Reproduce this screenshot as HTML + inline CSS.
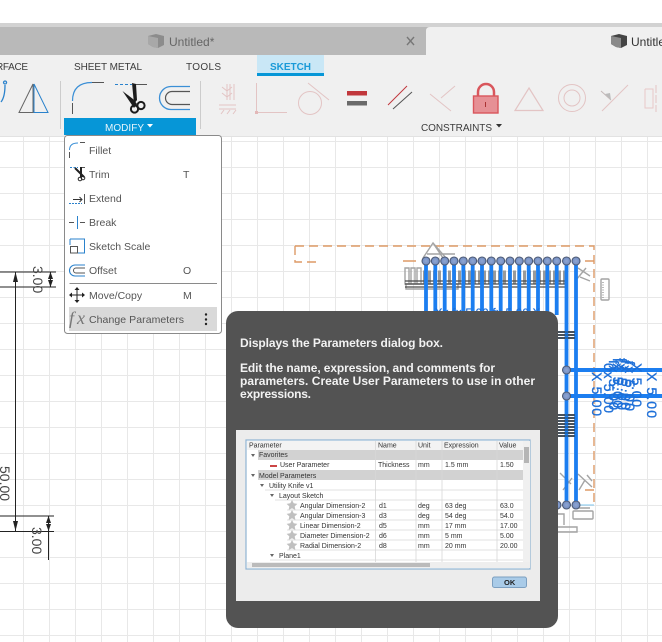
<!DOCTYPE html>
<html><head><meta charset="utf-8"><style>
html,body{margin:0;padding:0;background:#fff}
svg{display:block}
text{font-family:"Liberation Sans",sans-serif}
.m{font-size:10.5px;fill:#555}
.tb{font-size:10px;fill:#3c3c3c}
.tip{font-size:12px;font-weight:bold;fill:#f2f2f2}
.t{font-size:7px;fill:#333}
</style></head><body>
<svg width="662" height="642" viewBox="0 0 662 642" xmlns="http://www.w3.org/2000/svg">
<defs>
<pattern id="g" x="23" y="141" width="26" height="26" patternUnits="userSpaceOnUse">
<path d="M0.5 0V26M0 0.5H26" stroke="#e8e8e8" stroke-width="1" fill="none"/>
</pattern>
<filter id="b"><feGaussianBlur stdDeviation="0.35"/></filter>
<radialGradient id="c"><stop offset="0" stop-color="#8fa6d3"/><stop offset="1" stop-color="#728cc0"/></radialGradient>
</defs>
<rect width="662" height="642" fill="#fff"/>
<rect y="137" width="662" height="505" fill="url(#g)"/>

<!-- tab bar -->
<rect y="23" width="662" height="4" fill="#d2d2d2"/>
<rect y="27" width="662" height="28" fill="#b9b9b9"/>
<path d="M426 55V31q0-4 4-4H662V55Z" fill="#f0f0f0"/>
<rect y="55" width="662" height="81" fill="#f0f0f0"/>
<rect y="136" width="662" height="1" fill="#e2e2e2"/>
<path d="M148 36l8-2 8 2v9l-6 3-5-1-5-3Z" fill="#8c8c8c"/><path d="M148 36l10 2v10l-5-1-5-3Z" fill="#a8a8a8"/>
<text x="169" y="46" font-size="12" fill="#666">Untitled*</text>
<path d="M407 37l7 8M414 37l-7 8" stroke="#777" stroke-width="1.4"/>
<path d="M611 36l8-2 8 2v9l-6 3-5-1-5-3Z" fill="#444"/><path d="M611 36l10 2v10l-5-1-5-3Z" fill="#8a8a8a"/>
<text x="631" y="46" font-size="12" fill="#333">Untitled</text>

<!-- ribbon tabs -->
<text x="-4" y="70" class="tb" textLength="32">RFACE</text>
<text x="74" y="70" class="tb" textLength="68">SHEET METAL</text>
<text x="186" y="70" class="tb" textLength="35">TOOLS</text>
<rect x="257" y="55" width="67" height="18" fill="#c9e7f6"/>
<rect x="257" y="73" width="67" height="3" fill="#0696d7"/>
<text x="270" y="70" font-size="10" font-weight="bold" fill="#1a9ad8" textLength="41">SKETCH</text>

<!-- toolbar icons -->
<path d="M5 84a1.500 1.500 0 1 1 .1 0M5 85q0 12-4 17" stroke="#2a82cc" stroke-width="1.300" fill="none"/>
<path d="M33 84L19 112.500H33Z" fill="none" stroke="#666" stroke-width="1"/>
<path d="M34 84L48 112.500H34Z" fill="none" stroke="#2a82cc" stroke-width="1"/>
<rect x="60" y="81" width="1" height="48" fill="#ccc"/>
<path d="M72.500 101Q72.500 82.500 92 82.500" fill="none" stroke="#3a8fd6" stroke-width="1.200"/>
<path d="M92 82.500H104M72.500 103V114" stroke="#555" stroke-width="1"/>
<path d="M115 84.500H132" stroke="#2a82cc" stroke-dasharray="3 2"/><path d="M135 84.500H147" stroke="#555"/>
<path d="M132 83L136 84L137 100L134 104Z" fill="#1c1c1c"/>
<path d="M122.500 91L133 99L137 104L134 108Z" fill="#1c1c1c"/>
<circle cx="134.500" cy="109" r="3.600" fill="none" stroke="#1c1c1c" stroke-width="2"/>
<circle cx="141" cy="105.500" r="3.600" fill="none" stroke="#1c1c1c" stroke-width="2"/>
<path d="M190 86.500H171A11.500 11.500 0 0 0 171 109.500H190" fill="none" stroke="#3a8fd6" stroke-width="1.300"/>
<path d="M190 91.500H172A6.500 6.500 0 0 0 172 104.500H190" fill="none" stroke="#555" stroke-width="1.200"/>
<rect x="200" y="81" width="1" height="48" fill="#ccc"/>
<g fill="none" stroke="#e3c4c4" stroke-width="1">
<path d="M227 84V100M230 84V100M234 84V100M222 87l5 4 5-4M222 93l5 4 5-4M219 105H236M219 109H236M221 114l3-4M227 114l3-4M233 114l3-4"/>
<path d="M256.500 83V112.500H287"/>
<circle cx="310" cy="103" r="11.500"/><path d="M308 83L329 100"/>
<path d="M430 94L451 111M455 86L441 98"/>
<path d="M529 88L543 110.500H515Z" stroke-width="1.200"/>
<circle cx="572" cy="98" r="13.500"/><circle cx="572" cy="98" r="8"/>
<path d="M602 111L628 85"/><path d="M645 89H653V108H645V89" stroke="#e8c8c8"/><path d="M656 85V112" stroke-dasharray="8 2"/>
</g>
<path d="M601 91L611 100" stroke="#c4b8b8" fill="none"/>
<rect x="255" y="111" width="3" height="3" fill="#e3b8b8"/>
<path d="M605 94l6 6-1-7Z" fill="#bbb"/>
<rect x="347" y="91" width="20" height="4.500" fill="#c1373c"/>
<rect x="347" y="101" width="20" height="4.500" fill="#6a6a6a"/>
<path d="M388 105L407 86" stroke="#c1373c" stroke-width="1"/><path d="M393 109L412 92" stroke="#555" stroke-width="1"/>
<path d="M478 96V92a8 8 0 0 1 16 0V96" fill="none" stroke="#d9565c" stroke-width="2.500"/>
<rect x="473.500" y="96" width="24.500" height="17" fill="#e69095" stroke="#d9565c" stroke-width="1.400"/>
<path d="M485.500 102V107" stroke="#a33" stroke-width="1"/>

<!-- panel footers -->
<rect x="64" y="118" width="132" height="17" fill="#0696d7"/>
<text x="105" y="131" font-size="10" fill="#e8f5fc" textLength="39">MODIFY</text>
<path d="M147 124h6l-3 3.500Z" fill="#fff"/>
<text x="421" y="131" font-size="10" fill="#3c3c3c" textLength="71">CONSTRAINTS</text>
<path d="M496 124h6l-3 3.500Z" fill="#333"/>

<!-- left dimensions -->
<g stroke="#222" stroke-width="1" fill="none">
<path d="M0 272H56M0 287H56M0 516H54M0 531.500H54M15.500 272V531M50.500 272V287M48.500 516V560"/>
</g>
<path d="M15.500 272l-2.500 10h5ZM15.500 531l-2.500-10h5ZM50.500 272l-2.500 7h5ZM50.500 287l-2.500-7h5ZM48.500 516l-2.500 7h5ZM48.500 531l-2.500-7h5Z" fill="#222"/>
<g font-size="14" fill="#444">
<text transform="translate(33,266) rotate(90)">3.00</text>
<text transform="translate(0,466) rotate(90)">50.00</text>
<text transform="translate(32,527) rotate(90)">3.00</text>
</g>

<!-- sketch -->
<g filter="url(#b)">
<g fill="none" stroke="#dd9a66" stroke-width="1.400" stroke-dasharray="9 5">
<path d="M295 246H594V505M295 246V262H316"/>
</g>
<path d="M403 261H416M585 261H594M585 490H594" stroke="#dd9a66" stroke-width="1.400"/>
<g fill="none" stroke="#a4a4a4" stroke-width="1.400">
<path d="M423 258L433 243L443 258M427 254H455M433 243L446 258"/>
<path d="M405 268h4v16h-4zM411 268h4v16h-4zM417 268h4v16h-4zM406 284h52v5h-52z"/>
<path d="M590 281L580 277M586 268L576 280M578 268L590 276"/>
<rect x="601" y="279" width="8" height="21" rx="1"/>
<path d="M603 282V298" stroke-dasharray="1 1.500" stroke-width="1.500"/>
<path d="M578 474L592 487M585 480L579 490M587 475L592 481"/>
<rect x="573" y="511" width="20" height="8" rx="1"/>
<path d="M575 508H590M560 473L571 484M563 490L572 478" />
<path d="M558 514H564V525M558 527H577V532H558"/>
</g>
<path d="M423 277H565" stroke="#9a9a9a" stroke-width="13" stroke-dasharray="3 2"/>
<path d="M405 281H565M405 284H565M405 287H565" stroke="#4a4a4a" stroke-width="1.300"/>
<g stroke="#1a7ef0" stroke-width="3.800" fill="none">
<path d="M426 261V315M435.300 261V315M444.700 261V315M454 261V315M463.300 261V315M472.700 261V315M482 261V315M491.300 261V315M500.700 261V315M510 261V315M519.300 261V315M528.700 261V315M538 261V315M547.300 261V315M556.700 261V315M566.500 261V505M576 261V505"/>
<path d="M566 370H662M566 396H662" stroke-width="4"/>
</g>
<path d="M558 332H575M558 335H575M558 338H575M558 415H575M558 418H575M558 421H575M558 424H575M558 427H575M558 430H575M558 433H575M558 436H575" stroke="#2f3b46" stroke-width="1.800"/>
<path d="M566.500 330V440M576 330V440" stroke="#1a7ef0" stroke-width="3" opacity=".55"/>
<path d="M576 505H594" stroke="#7cc4ec"/>
<g fill="url(#c)" stroke="#4d5a74" stroke-width="1.100">
<circle cx="426" cy="261" r="4"/><circle cx="435.300" cy="261" r="4"/><circle cx="444.700" cy="261" r="4"/><circle cx="454" cy="261" r="4"/><circle cx="463.300" cy="261" r="4"/><circle cx="472.700" cy="261" r="4"/><circle cx="482" cy="261" r="4"/><circle cx="491.300" cy="261" r="4"/><circle cx="500.700" cy="261" r="4"/><circle cx="510" cy="261" r="4"/><circle cx="519.300" cy="261" r="4"/><circle cx="528.700" cy="261" r="4"/><circle cx="538" cy="261" r="4"/><circle cx="547.300" cy="261" r="4"/><circle cx="556.700" cy="261" r="4"/><circle cx="566.500" cy="261" r="4"/><circle cx="576" cy="261" r="4"/>
<circle cx="566.500" cy="370" r="4"/><circle cx="566.500" cy="396" r="4"/>
<circle cx="557" cy="505" r="4"/><circle cx="566.500" cy="505" r="4"/><circle cx="576" cy="505" r="4"/>
</g>
<g fill="#1f6fd8" stroke="#1f6fd8" stroke-width=".35" font-size="14">
<text transform="translate(592,372) rotate(90)" textLength="44">X 5.00</text>
<text transform="translate(604,363) rotate(90)" textLength="50">0x 5.00</text>
<text transform="translate(609,360) rotate(90)" textLength="50">fx 5.00</text>
<text transform="translate(613,358) rotate(90)" textLength="50">fx 5.00</text>
<text transform="translate(617,358) rotate(90)" textLength="52">fx 5.00</text>
<text transform="translate(621,360) rotate(90)" textLength="50">fx 5.00</text>
<text transform="translate(625,361) rotate(90)" textLength="50">fx 5.00</text>
<text transform="translate(632,363) rotate(90)" textLength="44">X 5.00</text>
<text transform="translate(647,372) rotate(90)" textLength="46">X 5.00</text>
</g>
<text transform="translate(435,316)" font-size="11" fill="#1f6fd8" stroke="#1f6fd8" stroke-width=".3" textLength="105">Xx fx 5.00 fx 5.00 X</text>
</g>

<!-- menu -->
<rect x="64.500" y="135.500" width="157" height="198" rx="3" fill="#fff" stroke="#8a8a8a"/>
<rect x="69" y="307" width="148" height="24" fill="#d9d9d9"/>
<path d="M69.500 283.500H217" stroke="#8a8a8a" fill="none"/>
<text x="89" y="154" class="m">Fillet</text>
<text x="89" y="178" class="m">Trim</text><text x="183" y="178" class="m">T</text>
<text x="89" y="202" class="m">Extend</text>
<text x="89" y="226" class="m">Break</text>
<text x="89" y="250" class="m">Sketch Scale</text>
<text x="89" y="274" class="m">Offset</text><text x="183" y="274" class="m">O</text>
<text x="89" y="299" class="m">Move/Copy</text><text x="183" y="299" class="m">M</text>
<text x="89" y="323" class="m" textLength="95">Change Parameters</text>
<!-- menu icons -->
<path d="M69.500 150Q69.500 143 78 143" fill="none" stroke="#3a8fd6"/><path d="M80 142.500H85M69.500 152V158" stroke="#555"/>
<path d="M70 167.500H78" stroke="#2a82cc" stroke-dasharray="2 1.500"/><path d="M80 167.500H85" stroke="#555"/>
<path d="M75 168L84 177M81 167L81 177" stroke="#222" stroke-width="2"/><circle cx="80" cy="179" r="1.800" fill="none" stroke="#222"/><circle cx="83" cy="178" r="1.800" fill="none" stroke="#222"/>
<path d="M69 203.500H82" stroke="#2a82cc" stroke-dasharray="2 1"/><path d="M73 199.500H82M79.500 197l2.500 2.500-2.500 2.500" stroke="#333" fill="none"/><path d="M84.500 194V204" stroke="#555"/>
<path d="M69 222.500H74M80 222.500H85" stroke="#555"/><path d="M77.500 216V229" stroke="#2a82cc"/>
<path d="M70 239H84.500V253H78M70 239V245" fill="none" stroke="#2a82cc"/><rect x="70.500" y="246.500" width="7" height="6.500" fill="none" stroke="#555"/>
<path d="M85 265H75A5.500 5.500 0 0 0 75 276H85" fill="none" stroke="#2a82cc" stroke-width="1.100"/>
<path d="M85 268H76A2.500 2.500 0 0 0 76 273H85" fill="none" stroke="#555"/>
<path d="M70 295H84M77 288V302" stroke="#222"/><path d="M77 287l-2.500 3h5ZM77 303l-2.500-3h5ZM69 295l3-2.500v5ZM85 295l-3-2.500v5Z" fill="#222"/>
<text x="69" y="324" font-style="italic" font-size="18" fill="#777" textLength="16" style="font-family:'Liberation Serif',serif">fx</text>
<circle cx="206" cy="314.500" r="1.200" fill="#222"/><circle cx="206" cy="319.500" r="1.200" fill="#222"/><circle cx="206" cy="324" r="1.200" fill="#222"/>

<!-- tooltip -->
<rect x="226" y="311" width="332" height="317" rx="12" fill="#535353"/>
<text x="240" y="347" class="tip" textLength="203">Displays the Parameters dialog box.</text>
<text x="240" y="372" class="tip" textLength="255">Edit the name, expression, and comments for</text>
<text x="240" y="385" class="tip" textLength="295">parameters. Create User Parameters to use in other</text>
<text x="240" y="398" class="tip" textLength="71">expressions.</text>

<g filter="url(#b)">
<rect x="236" y="430" width="304" height="171" fill="#ececec"/>
<rect x="246" y="440" width="284" height="129" fill="#fff" stroke="#8fb3d3" stroke-width="1.200"/>
<rect x="247" y="441" width="276" height="9" fill="#f3f3f3"/>
<rect x="258" y="450" width="265" height="10" fill="#d2d2d2"/>
<rect x="258" y="470" width="265" height="10" fill="#d2d2d2"/>
<g stroke="#d8d8d8" stroke-width="0.800">
<path d="M375.500 441V562M416 441V562M442 441V562M497 441V562"/>
<path d="M265 490H523M275 500H523M287 510H523M287 520H523M287 530H523M287 540H523M287 550H523M270 560H523"/>
</g>
<rect x="523" y="441" width="7" height="121" fill="#f0f0f0"/>
<rect x="524" y="447" width="5" height="16" fill="#b5b5b5"/>
<rect x="247" y="562" width="283" height="6" fill="#eee"/>
<rect x="252" y="563" width="178" height="4" fill="#bbb"/>
<path d="M251 454l4 0-2 3ZM251 474l4 0-2 3ZM260 484l4 0-2 3ZM270 494l4 0-2 3ZM270 554l4 0-2 3Z" fill="#666"/>
<rect x="270" y="465" width="7" height="2" fill="#c44"/>
<g fill="#c0c0c0"><path d="M292 500l1.700 3.300 3.700.6-2.700 2.500.7 3.600-3.400-1.800-3.400 1.800.7-3.600-2.700-2.500 3.700-.6Z"/>
<path d="M292 510l1.700 3.300 3.700.6-2.700 2.500.7 3.600-3.400-1.800-3.400 1.800.7-3.600-2.700-2.500 3.700-.6Z"/>
<path d="M292 520l1.700 3.300 3.700.6-2.700 2.500.7 3.600-3.400-1.800-3.400 1.800.7-3.600-2.700-2.500 3.700-.6Z"/>
<path d="M292 530l1.700 3.300 3.700.6-2.700 2.500.7 3.600-3.400-1.800-3.400 1.800.7-3.600-2.700-2.500 3.700-.6Z"/>
<path d="M292 540l1.700 3.300 3.700.6-2.700 2.500.7 3.600-3.400-1.800-3.400 1.800.7-3.600-2.700-2.500 3.700-.6Z"/></g>
<g>
<text class="t" x="249" y="447.500">Parameter</text><text class="t" x="378" y="447.500">Name</text><text class="t" x="418" y="447.500">Unit</text><text class="t" x="444" y="447.500">Expression</text><text class="t" x="499" y="447.500">Value</text>
<text class="t" x="259" y="457">Favorites</text>
<text class="t" x="280" y="467">User Parameter</text><text class="t" x="378" y="467">Thickness</text><text class="t" x="418" y="467">mm</text><text class="t" x="445" y="467">1.5 mm</text><text class="t" x="500" y="467">1.50</text>
<text class="t" x="259" y="478">Model Parameters</text>
<text class="t" x="269" y="488">Utility Knife v1</text>
<text class="t" x="279" y="498">Layout Sketch</text>
<text class="t" x="300" y="508">Angular Dimension-2</text><text class="t" x="379" y="508">d1</text><text class="t" x="418" y="508">deg</text><text class="t" x="445" y="508">63 deg</text><text class="t" x="500" y="508">63.0</text>
<text class="t" x="300" y="518">Angular Dimension-3</text><text class="t" x="379" y="518">d3</text><text class="t" x="418" y="518">deg</text><text class="t" x="445" y="518">54 deg</text><text class="t" x="500" y="518">54.0</text>
<text class="t" x="300" y="528">Linear Dimension-2</text><text class="t" x="379" y="528">d5</text><text class="t" x="418" y="528">mm</text><text class="t" x="445" y="528">17 mm</text><text class="t" x="500" y="528">17.00</text>
<text class="t" x="300" y="538">Diameter Dimension-2</text><text class="t" x="379" y="538">d6</text><text class="t" x="418" y="538">mm</text><text class="t" x="445" y="538">5 mm</text><text class="t" x="500" y="538">5.00</text>
<text class="t" x="300" y="548">Radial Dimension-2</text><text class="t" x="379" y="548">d8</text><text class="t" x="418" y="548">mm</text><text class="t" x="445" y="548">20 mm</text><text class="t" x="500" y="548">20.00</text>
<text class="t" x="279" y="558">Plane1</text>
</g>
<rect x="492.500" y="577" width="34" height="10.500" rx="2" fill="#a9cbe8" stroke="#7b9fc0"/>
<text x="504" y="585" font-size="7.500" font-weight="bold" fill="#222">OK</text>
</g>
</svg>
</body></html>
